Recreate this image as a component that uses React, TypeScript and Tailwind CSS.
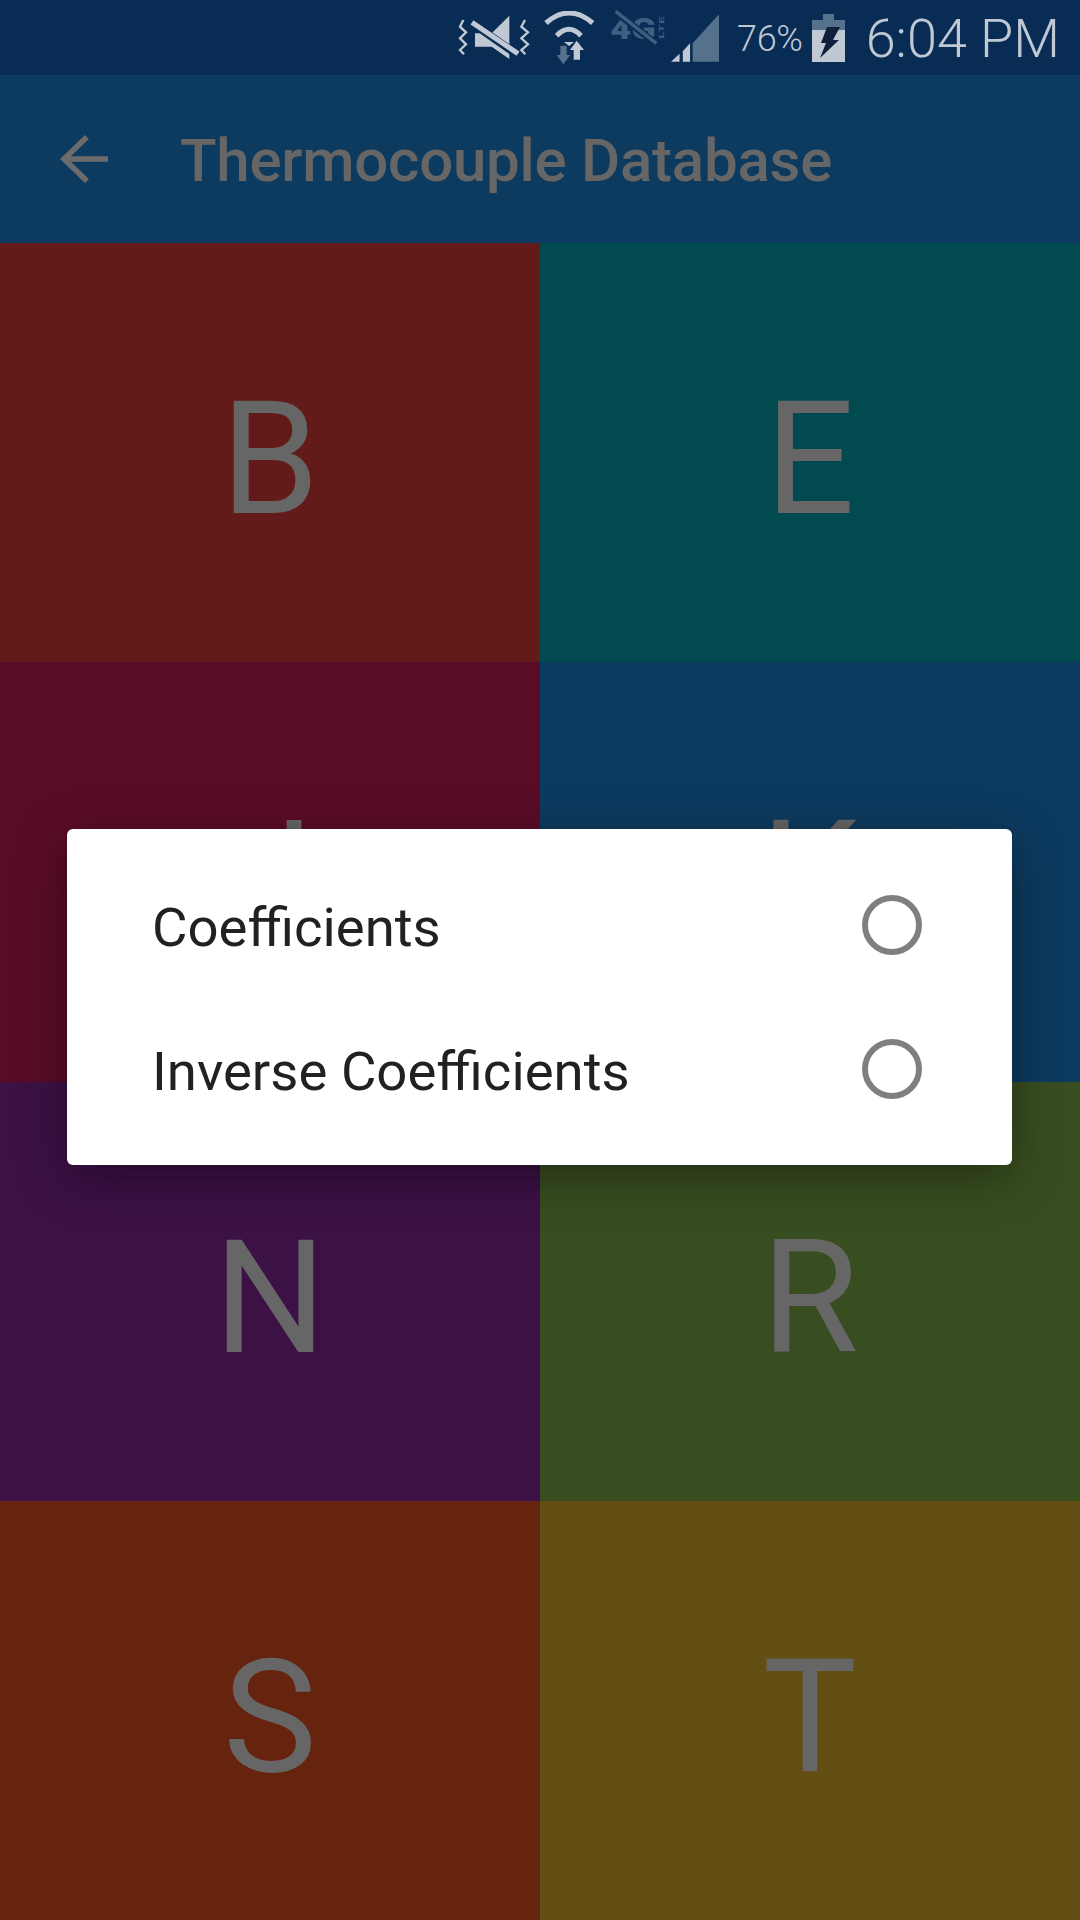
const tiles = [
  { letter: "B", bg: "bg-[#621b18]" },
  { letter: "E", bg: "bg-[#004a50]" },
  { letter: "J", bg: "bg-[#5a0c27]" },
  { letter: "K", bg: "bg-[#0d3b60]" },
  { letter: "N", bg: "bg-[#3c1146]" },
  { letter: "R", bg: "bg-[#394e20]" },
  { letter: "S", bg: "bg-[#66230e]" },
  { letter: "T", bg: "bg-[#634e13]" },
];

const LIGHT = "#c0c8d4";
const DIM = "#56718c";

function MuteIcon() {
  return (
    <svg width="72" height="46" viewBox="24 40 216 138">
      <polyline points="40,55 30,75 48,92 30,110 48,128 30,145 42,158" fill="none" stroke={LIGHT} strokeWidth="7" />
      <polyline points="225,55 214,75 234,92 214,110 234,128 214,145 226,158" fill="none" stroke={LIGHT} strokeWidth="7" />
      <polygon points="75,95 125,95 178,42 178,172 125,135 75,135" fill={LIGHT} />
      <line x1="52" y1="54" x2="214" y2="168" stroke="#082c54" strokeWidth="24" />
      <line x1="66" y1="62" x2="204" y2="156" stroke={LIGHT} strokeWidth="15" />
    </svg>
  );
}

function WifiIcon() {
  return (
    <svg width="52" height="54" viewBox="282 26 156 162">
      <path d="M288 62 Q357 2 428 62" fill="none" stroke={LIGHT} strokeWidth="15" />
      <path d="M320 100 Q357 62 393 100" fill="none" stroke={LIGHT} strokeWidth="15" />
      <polygon points="342,119 372,119 357,131" fill={LIGHT} />
      <polygon points="331,130 350,130 350,158 361,158 340,186 320,158 331,158" fill={DIM} />
      <polygon points="380,115 402,143 390,143 390,172 371,172 371,143 360,143" fill={LIGHT} />
    </svg>
  );
}

function LteIcon() {
  return (
    <svg width="54" height="36" viewBox="475 30 162 108" className="overflow-visible">
      <text x="476" y="116" fontFamily="Roboto, sans-serif" fontWeight="900" fontSize="88" fill="#3f5f80" textLength="136" lengthAdjust="spacingAndGlyphs">4G</text>
      <text transform="translate(636 116) rotate(-90)" fontFamily="Roboto, sans-serif" fontWeight="700" fontSize="22" fill="#3f5f80" textLength="68" lengthAdjust="spacingAndGlyphs">LTE</text>
      <line x1="490" y1="34" x2="616" y2="134" stroke="#082c54" strokeWidth="20" />
      <line x1="492" y1="34" x2="614" y2="130" stroke="#3f5f80" strokeWidth="10" />
    </svg>
  );
}

function SignalIcon() {
  return (
    <svg width="48" height="48" viewBox="662 36 146 144">
      <polygon points="728,180 808,180 808,36 728,124" fill={DIM} />
      <polygon points="662,180 688,180 688,156" fill={LIGHT} />
      <polygon points="698,180 720,180 720,124 698,148" fill={LIGHT} />
    </svg>
  );
}

function BatteryIcon() {
  return (
    <svg width="33" height="48" viewBox="0 0 33 48">
      <rect x="11" y="0" width="11" height="7" fill={DIM} />
      <rect x="0" y="6" width="33" height="10" fill={DIM} />
      <rect x="0" y="16" width="33" height="32" fill={LIGHT} />
      <polygon points="15,13 28,13 21,26 27,26 8,44 14,29 9,29" fill="#10203a" />
    </svg>
  );
}

export default function App() {
  return (
    <div className="relative w-[1080px] h-[1920px] overflow-hidden font-['Roboto',sans-serif] bg-black">
      <div className="h-[75px] bg-[#082c54] flex items-center pl-[458px]">
        <MuteIcon />
        <div className="ml-[14px]"><WifiIcon /></div>
        <div className="ml-[14px] -mt-[20px]"><LteIcon /></div>
        <div className="ml-[7px]"><SignalIcon /></div>
        <span className="ml-[18px] mt-[2px] text-[36px] leading-none font-light text-[#c0c8d4] tracking-[-0.3px]">76%</span>
        <div className="ml-[9px]"><BatteryIcon /></div>
        <span className="ml-[21px] mt-[2px] text-[54px] leading-none font-light text-[#c0c8d4]">6:04 PM</span>
      </div>

      <div className="h-[168px] bg-[#0d3b60] flex items-center pl-[60px]">
        <svg width="48" height="48" viewBox="0 0 48 48" fill="none" stroke="#6c6c6c" strokeWidth="5.5">
          <path d="M4 24H48" />
          <path d="M27 2 4 24l0 0 23 22" />
        </svg>
        <span className="ml-[72px] mt-[3px] text-[60px] leading-none font-medium tracking-[-0.25px] text-[#666666]">Thermocouple Database</span>
      </div>

      <div className="grid grid-cols-2 grid-rows-4 h-[1677px]">
        {tiles.map((tile) => (
          <div key={tile.letter} className={`${tile.bg} flex items-center justify-center pt-[13px] text-[158px] leading-none text-[#666666]`}>
            {tile.letter}
          </div>
        ))}
      </div>

      <div className="absolute left-[67px] top-[829px] w-[945px] h-[336px] bg-white rounded-[6px] shadow-[0_12px_50px_rgba(0,0,0,0.4)] pt-[24px] pl-[85px] pr-[90px]">
        {["Coefficients", "Inverse Coefficients"].map((label) => (
          <div key={label} className="flex items-center justify-between h-[144px]">
            <span className="mt-[4px] text-[54.5px] leading-none text-[#212121]">{label}</span>
            <div className="w-[60px] h-[60px] rounded-full border-[6px] border-[#7f7f7f]" />
          </div>
        ))}
      </div>
    </div>
  );
}
